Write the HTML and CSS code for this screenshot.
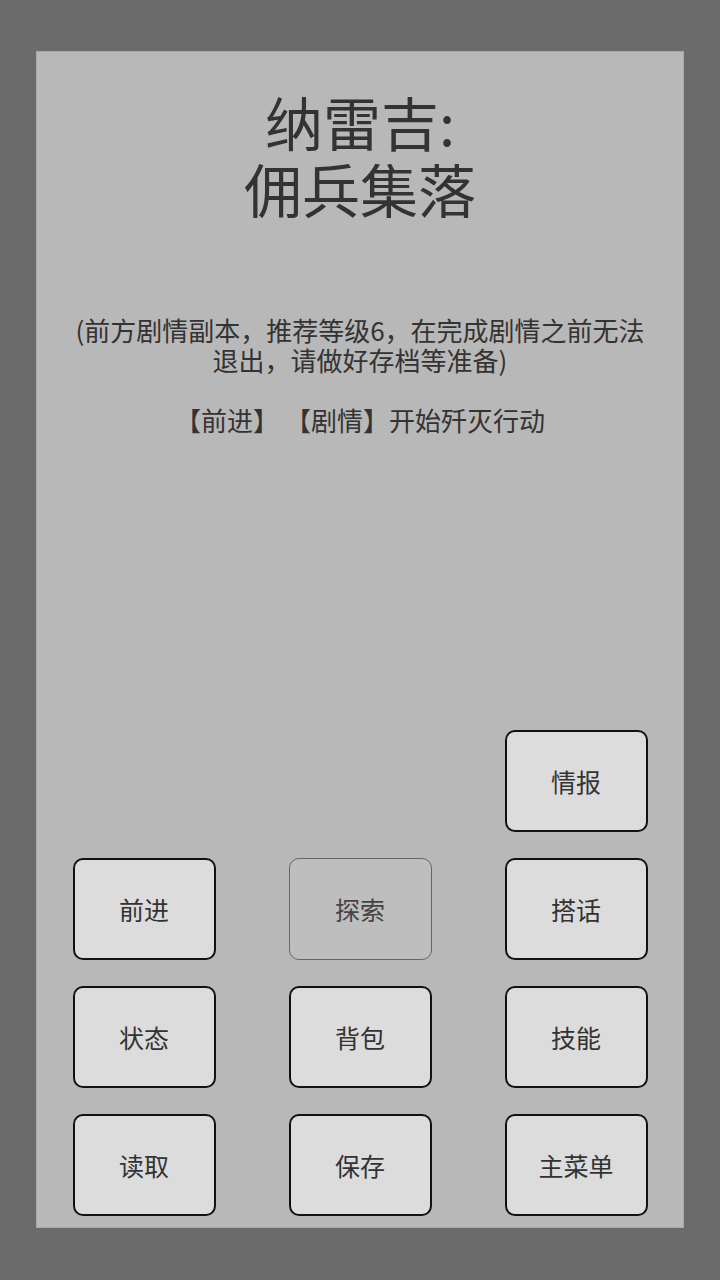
FILE: index.html
```html
<!DOCTYPE html>
<html lang="zh-CN">
<head>
    <meta charset="UTF-8">
    <meta name="viewport" content="width=device-width, initial-scale=1.0">
    <title>纳雷吉: 佣兵集落</title>
    <link rel="stylesheet" href="styles.css">
</head>
<body>
    <div class="panel">
        <h1 class="title">
            <span class="title-line">纳雷吉:</span>
            <span class="title-line">佣兵集落</span>
        </h1>
        <div class="story">
            <p>(前方剧情副本，推荐等级6，在完成剧情之前无法退出，请做好存档等准备)</p>
            <p>【前进】 【剧情】开始歼灭行动</p>
        </div>
        <div class="actions">
            <div class="spacer"></div>
            <div class="spacer"></div>
            <button class="btn">情报</button>
            <button class="btn">前进</button>
            <button class="btn" disabled>探索</button>
            <button class="btn">搭话</button>
            <button class="btn">状态</button>
            <button class="btn">背包</button>
            <button class="btn">技能</button>
            <button class="btn">读取</button>
            <button class="btn">保存</button>
            <button class="btn">主菜单</button>
        </div>
    </div>
</body>
</html>
```

FILE: styles.css
```css
body {
    margin: 0;
    height: 1280px;
    background-color: #6b6b6b;
    font-family: "Noto Sans CJK SC", "Noto Sans", sans-serif;
    color: #333;
    display: flex;
    justify-content: center;
    align-items: flex-start;
}
.panel {
    box-sizing: border-box;
    width: 648px;
    height: 1177px;
    margin-top: 51px;
    background-color: #b8b8b8;
    border: 1px solid #a9a9a9;
    padding: 36px 34px 11px;
    display: flex;
    flex-direction: column;
}
.title {
    margin: 0;
    text-align: center;
    font-size: 58px;
    font-weight: normal;
    line-height: 67px;
}
.title-line {
    display: block;
    height: 67px;
}
.story {
    margin-top: 93px;
    padding: 0 2px;
    text-align: center;
    font-size: 26px;
    line-height: 30px;
}
.story p {
    margin: 0 0 30px;
}
.actions {
    margin-top: auto;
    display: grid;
    grid-template-columns: repeat(3, 143px);
    grid-auto-rows: 102px;
    column-gap: 73px;
    row-gap: 26px;
    justify-content: center;
}
.btn {
    margin: 0;
    padding: 0;
    font-family: inherit;
    font-size: 25px;
    color: #333;
    background-color: #dcdcdc;
    border: 2px solid #111;
    border-radius: 10px;
}
.btn:disabled {
    background-color: #bebebe;
    border: 1.5px solid #666;
    color: #444;
}
```
